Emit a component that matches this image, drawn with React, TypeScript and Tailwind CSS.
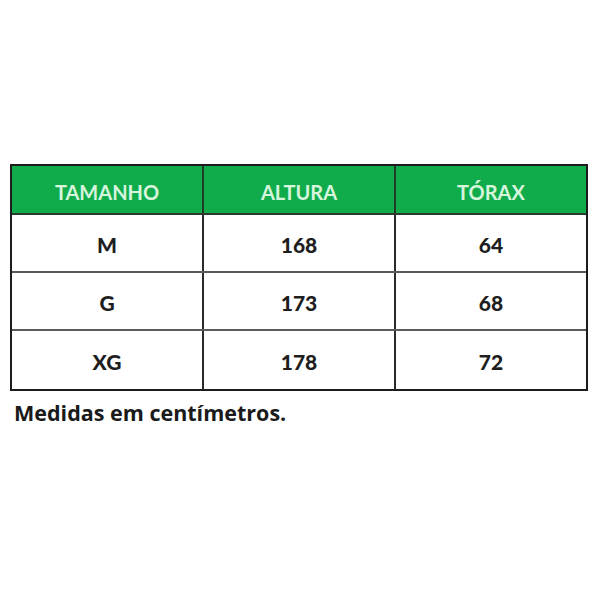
import React from "react";

const rows = [
  { size: "M", altura: "168", torax: "64" },
  { size: "G", altura: "173", torax: "68" },
  { size: "XG", altura: "178", torax: "72" },
];

const App = () => {
  return (
    <div
      className="w-[600px] h-[600px] bg-white pt-[164px] px-[10px]"
      style={{ fontFamily: "Lato, 'Open Sans', sans-serif" }}
    >
      <div className="w-[578px] border-2 border-[#1c1c1c]">
        <div className="grid grid-cols-[192px_192px_1fr] h-[49px] bg-[#10ac4c] border-b-2 border-[#2a3a2e] text-[20px] font-bold text-[#d6f5dc]">
          <div className="flex items-center justify-center pt-[4px] border-r-2 border-[#1f3a27]">
            TAMANHO
          </div>
          <div className="flex items-center justify-center pt-[4px] border-r-2 border-[#1f3a27]">
            ALTURA
          </div>
          <div className="flex items-center justify-center pt-[4px]">TÓRAX</div>
        </div>
        {rows.map((r, i) => (
          <div
            key={r.size}
            className={`grid grid-cols-[192px_192px_1fr] h-[58px] text-[21px] font-black text-[#1e1e1e] ${
              i < rows.length - 1 ? "border-b-2 border-[#5a5a5a]" : ""
            }`}
          >
            <div className="flex items-center justify-center pt-[3px] border-r-2 border-[#2a2a2a]">
              {r.size}
            </div>
            <div className="flex items-center justify-center pt-[3px] border-r-2 border-[#2a2a2a]">
              {r.altura}
            </div>
            <div className="flex items-center justify-center pt-[3px]">{r.torax}</div>
          </div>
        ))}
      </div>
      <p
        className="mt-[8px] pl-[4px] text-[21.5px] font-bold text-[#1a1a1a] leading-[28px]"
        style={{ fontFamily: "'Open Sans', sans-serif" }}
      >
        Medidas em centímetros.
      </p>
    </div>
  );
};

export default App;
